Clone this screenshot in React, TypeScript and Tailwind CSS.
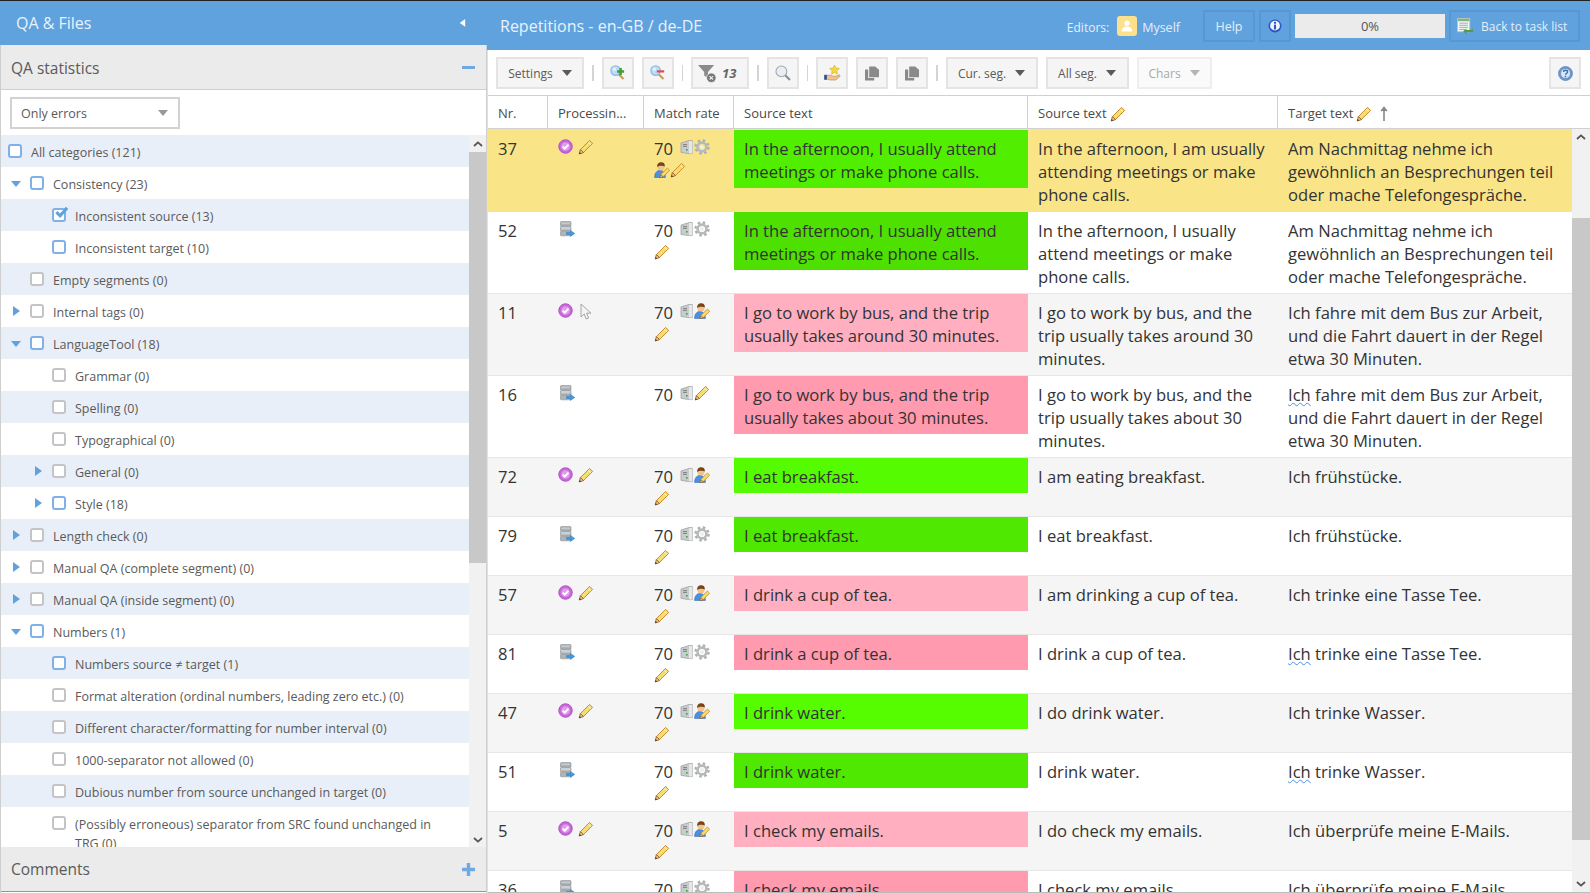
import React from "react";

type P = { className?: string };

const Pencil = ({ className = "" }: P) => (
  <svg viewBox="0 0 16 16" className={`w-4 h-4 shrink-0 ${className}`}>
    <path d="M11.6 1.4l3 3L5.4 13.6l-3-3z" fill="#f7dc6f" stroke="#c98d2e" strokeWidth="1" />
    <path d="M10.2 3.2l3 3" stroke="#fff3b8" strokeWidth="1" />
    <path d="M2.4 10.6l3 3L1.2 15z" fill="#f3d3a5" stroke="#8a5a20" strokeWidth="0.9" />
    <path d="M1.2 15l.6-2 1.4 1.4z" fill="#5a3510" />
  </svg>
);

const Purple = () => (
  <svg viewBox="0 0 16 16" className="w-[15px] h-[15px] shrink-0">
    <circle cx="8" cy="8" r="7.2" fill="#c768d6" stroke="#b04fc2" strokeWidth="1" />
    <circle cx="8" cy="8" r="4.6" fill="#dca0e6" />
    <path d="M5 8.2l2.2 2.2L11.2 6" fill="none" stroke="#fff" strokeWidth="2" />
  </svg>
);

const Server = () => (
  <svg viewBox="0 0 14 16" className="w-[14px] h-4 shrink-0">
    <path d="M1 3l8-2.4h3.4V13.6H9L1 12.4z" fill="#c9cccc" stroke="#9ea3a3" strokeWidth="0.8" />
    <path d="M9 1v12.4h3.4V1z" fill="#e6e8e8" />
    <path d="M3 4.6h4M3 6.4h4" stroke="#777" strokeWidth="0.9" />
    <rect x="6" y="9" width="1.6" height="1.6" fill="#3aa04a" />
  </svg>
);

const Gear = () => (
  <svg viewBox="0 0 16 16" className="w-4 h-4 shrink-0">
    <circle cx="8" cy="8" r="6.4" fill="none" stroke="#aeb0b0" strokeWidth="2.6" strokeDasharray="2.5 2.52" />
    <circle cx="8" cy="8" r="4.4" fill="none" stroke="#b8baba" strokeWidth="2.6" />
    <circle cx="8" cy="8" r="2" fill="#eeeeee" />
  </svg>
);

const Person = () => (
  <svg viewBox="0 0 16 16" className="w-4 h-4 shrink-0">
    <path d="M0.6 15.4c0-4.4 2.2-7 5.4-7s5.4 2.6 5.4 7z" fill="#4a90e2" stroke="#2f68b0" strokeWidth="0.6" />
    <circle cx="7" cy="5" r="3.6" fill="#f2c391" />
    <path d="M3.2 5C2.8 1.4 5.2 0.2 7.2 0.2c2.4 0 4 1.4 3.6 4.4C9 3.6 5.4 3.4 3.2 5z" fill="#7a4516" />
    <path d="M13.4 6l2.2 2.2-6.6 6.6-2.2-2.2z" fill="#f7dc6f" stroke="#c98d2e" strokeWidth="0.9" />
    <path d="M6.8 12.6l2.2 2.2-3.2 1z" fill="#f3d3a5" stroke="#8a5a20" strokeWidth="0.7" />
  </svg>
);

const Db = () => (
  <svg viewBox="0 0 16 17" className="w-4 h-[17px] shrink-0 ml-px">
    <rect x="1.5" y="0.6" width="10.5" height="4.6" rx="0.8" fill="#aeb4b8" stroke="#868c90" strokeWidth="0.6" />
    <path d="M2.5 2.2h8.5" stroke="#d9dde0" strokeWidth="0.8" />
    <rect x="1.5" y="5.4" width="10.5" height="4.6" rx="0.8" fill="#bcc2c6" stroke="#868c90" strokeWidth="0.6" />
    <path d="M2.5 7h8.5" stroke="#e4e7e9" strokeWidth="0.8" />
    <rect x="1.5" y="10.2" width="10.5" height="4.6" rx="0.8" fill="#aeb4b8" stroke="#868c90" strokeWidth="0.6" />
    <path d="M7.5 11.4h4V9.4l4.2 3-4.2 3v-2h-4z" fill="#3f9be6" stroke="#2878c0" strokeWidth="0.5" />
  </svg>
);

const Cursor = () => (
  <svg viewBox="0 0 12 18" className="w-3 h-[18px] shrink-0 ml-[2px]">
    <path d="M1 1v13l3.2-3 2 5 2.4-1-2-4.8H11z" fill="#f4f4f4" stroke="#a5a5a5" strokeWidth="1" />
  </svg>
);

const Tri = ({ dir, color, size = 10 }: { dir: "down" | "right" | "left"; color: string; size?: number }) => {
  const pts = dir === "down" ? "0,1 10,1 5,7" : dir === "right" ? "1,0 8,5 1,10" : "8,0 1,5 8,10";
  const vb = dir === "down" ? "0 0 10 8" : "0 0 9 10";
  return (
    <svg viewBox={vb} width={size} className="shrink-0" fill={color}>
      <polygon points={pts} />
    </svg>
  );
};

const Chevron = ({ up }: { up: boolean }) => (
  <svg viewBox="0 0 10 6" className="w-[10px] h-[6px]">
    <path d={up ? "M1 5l4-3.6L9 5" : "M1 1l4 3.6L9 1"} fill="none" stroke="#555" strokeWidth="1.8" />
  </svg>
);

const Magnifier = ({ sign }: { sign: "plus" | "minus" }) => (
  <svg viewBox="0 0 16 16" className="w-4 h-4">
    <path d="M8.5 9l5 5" stroke="#d29a50" strokeWidth="2.2" />
    <circle cx="5.6" cy="5.6" r="4.8" fill="#bcdcf6" stroke="#8db8dc" strokeWidth="1.1" />
    <circle cx="4.4" cy="4.2" r="1.6" fill="#e6f3fd" />
    {sign === "plus" && <path d="M10.6 3v7M7.1 6.5h7" stroke="#3f9e3a" strokeWidth="2.4" />}
    {sign === "minus" && <path d="M6.8 6.4h7.4" stroke="#e04a4a" strokeWidth="2.2" />}
  </svg>
);

const Search = () => (
  <svg viewBox="0 0 16 16" className="w-4 h-4">
    <path d="M10 10l5 5" stroke="#8b8f93" strokeWidth="2.2" />
    <circle cx="6.4" cy="6.4" r="5.4" fill="#e8eef4" stroke="#a2a8ae" strokeWidth="1.1" />
  </svg>
);

const Funnel = () => (
  <svg viewBox="0 0 20 20" className="w-[19px] h-[19px] shrink-0">
    <path d="M0 1h17l-6.5 7.5V15l-4-3V8.5z" fill="#8b8b8b" />
    <circle cx="14" cy="14.5" r="5" fill="#777" stroke="#f5f5f5" strokeWidth="0.8" />
    <path d="M12.2 12.7l3.6 3.6M15.8 12.7l-3.6 3.6" stroke="#eee" strokeWidth="1.2" />
  </svg>
);

const StarHand = () => (
  <svg viewBox="0 0 17 16" className="w-[17px] h-4">
    <path d="M10.5 0l1.5 3 3.4.5-2.5 2.3.6 3.4-3-1.6-3 1.6.6-3.4-2.5-2.3L9 3z" fill="#f8d53e" stroke="#d3a521" strokeWidth="0.5" />
    <path d="M2.6 10.2h3.6l2.6 1h3.2l3.6-1.4c.7.8.3 1.7-.5 2.3L11.8 15H6L2.6 14z" fill="#f2c391" stroke="#b7813f" strokeWidth="0.6" />
    <rect x="0.2" y="9.8" width="2.6" height="5" fill="#2c4f8a" />
  </svg>
);

const Copy = () => (
  <svg viewBox="0 0 16 16" className="w-4 h-4">
    <path d="M1 4.5h3.2V13h6v2.6H1z" fill="#8a8a8a" />
    <path d="M5.2 1.5h6L15 4.8v7.4H5.2z" fill="#8a8a8a" />
  </svg>
);

const Info = () => (
  <svg viewBox="0 0 16 16" className="w-[14px] h-[14px]">
    <circle cx="8" cy="8" r="7.4" fill="#2f55c8" />
    <circle cx="8" cy="7.6" r="5.6" fill="#f2f5fc" />
    <rect x="6.8" y="3.2" width="2.4" height="2.2" fill="#2f55c8" />
    <rect x="6.8" y="6.4" width="2.4" height="5.6" fill="#2f55c8" />
  </svg>
);

const Question = () => (
  <svg viewBox="0 0 16 16" className="w-[15px] h-[15px]">
    <circle cx="8" cy="8" r="7.4" fill="#6f9ad0" stroke="#4f7cb8" strokeWidth="0.8" />
    <circle cx="8" cy="8" r="4.8" fill="#dde8f6" />
    <path d="M6 6.4c0-2.4 4.2-2.4 4.2 0 0 1.6-2.2 1.4-2.2 3" fill="none" stroke="#3f6fb0" strokeWidth="1.5" />
    <rect x="7.2" y="10.4" width="1.6" height="1.6" fill="#3f6fb0" />
  </svg>
);

const TaskList = () => (
  <svg viewBox="0 0 18 18" className="w-[17px] h-[17px] shrink-0">
    <rect x="0.5" y="0.5" width="13" height="14" fill="#f3f6f4" stroke="#b9c4be" />
    <rect x="1" y="1" width="12" height="2.4" fill="#7cb67a" />
    <path d="M2.5 5.5h9M2.5 7.7h9M2.5 9.9h9M2.5 12.1h6" stroke="#a0a8b0" strokeWidth="1" />
    <path d="M17 11.5v3.2H10v2.2L6.4 14l3.6-3v1.8h5z" fill="#4ea03e" />
  </svg>
);

const Avatar = () => (
  <div className="w-5 h-5 rounded-[3px] bg-[#fde08a] flex items-center justify-center">
    <svg viewBox="0 0 12 12" className="w-3 h-3" fill="#fff">
      <circle cx="6" cy="3.2" r="2.6" />
      <path d="M.8 11.4c0-3.4 2.2-5 5.2-5s5.2 1.6 5.2 5z" />
    </svg>
  </div>
);

type Node = { t: string; l: 0 | 1 | 2; caret?: "open" | "closed"; blue?: boolean; checked?: boolean };

const tree: Node[] = [
  { t: "All categories (121)", l: 0, blue: true },
  { t: "Consistency (23)", l: 1, caret: "open", blue: true },
  { t: "Inconsistent source (13)", l: 2, blue: true, checked: true },
  { t: "Inconsistent target (10)", l: 2, blue: true },
  { t: "Empty segments (0)", l: 1 },
  { t: "Internal tags (0)", l: 1, caret: "closed" },
  { t: "LanguageTool (18)", l: 1, caret: "open", blue: true },
  { t: "Grammar (0)", l: 2 },
  { t: "Spelling (0)", l: 2 },
  { t: "Typographical (0)", l: 2 },
  { t: "General (0)", l: 2, caret: "closed" },
  { t: "Style (18)", l: 2, caret: "closed", blue: true },
  { t: "Length check (0)", l: 1, caret: "closed" },
  { t: "Manual QA (complete segment) (0)", l: 1, caret: "closed" },
  { t: "Manual QA (inside segment) (0)", l: 1, caret: "closed" },
  { t: "Numbers (1)", l: 1, caret: "open", blue: true },
  { t: "Numbers source ≠ target (1)", l: 2, blue: true },
  { t: "Format alteration (ordinal numbers, leading zero etc.) (0)", l: 2 },
  { t: "Different character/formatting for number interval (0)", l: 2 },
  { t: "1000-separator not allowed (0)", l: 2 },
  { t: "Dubious number from source unchanged in target (0)", l: 2 },
  { t: "(Possibly erroneous) separator from SRC found unchanged in TRG (0)", l: 2 },
];

const Box = ({ blue, checked }: { blue?: boolean; checked?: boolean }) => (
  <div className={`relative w-[14px] h-[14px] shrink-0 rounded-[3px] border-2 bg-white ${blue ? "border-[#7fb1e6]" : "border-[#c4c4c4]"}`}>
    {checked && (
      <svg viewBox="0 0 16 14" className="absolute left-0 top-[-4px] w-[15px] h-[13px]">
        <path d="M2.5 6.5l4 4L14 2" fill="none" stroke="#5fa2de" strokeWidth="3.4" />
      </svg>
    )}
  </div>
);

const TreeRow = ({ n, i }: { n: Node; i: number }) => {
  const pad = n.l === 0 ? "pl-[7px]" : n.l === 1 ? "pl-[29px]" : "pl-[51px]";
  return (
    <div className={`relative min-h-8 shrink-0 flex ${pad} ${i % 2 === 0 ? "bg-[#e8eff9]" : "bg-white"}`}>
      {n.caret === "open" && (
        <div className="absolute top-[13px] left-[10px]">
          <Tri dir="down" color="#5fa2de" size={10} />
        </div>
      )}
      {n.caret === "closed" && (
        <div className={`absolute top-[11px] ${n.l === 2 ? "left-[33px]" : "left-[11px]"}`}>
          <Tri dir="right" color="#5fa2de" size={9} />
        </div>
      )}
      <div className="pt-[9px]">
        <Box blue={n.blue} checked={n.checked} />
      </div>
      <div className={`pt-[8px] pb-[5px] ml-[9px] text-[12.5px] leading-[19px] text-[#5a5a5a] ${n.l === 2 ? "w-[375px]" : ""}`}>{n.t}</div>
    </div>
  );
};

const Btn = ({ children, className = "" }: { children: React.ReactNode; className?: string }) => (
  <div className={`h-8 shrink-0 bg-[#f5f5f5] border-2 border-[#e4e4e4] flex items-center justify-center text-[12px] text-[#5a5a5a] ${className}`}>{children}</div>
);

const Sep = () => <div className="w-[1.5px] h-4 shrink-0 bg-[#d4d4d4]" />;

const Drop = ({ label, w, faded }: { label: string; w: string; faded?: boolean }) => (
  <Btn className={`${w} gap-[9px] ${faded ? "bg-[#fafafa] border-[#eeeeee] text-[#a9a9a9]" : ""}`}>
    <span className="pt-[2px]">{label}</span>
    <Tri dir="down" color={faded ? "#b5b5b5" : "#5a5a5a"} size={10} />
  </Btn>
);

type Seg = {
  nr: string;
  proc: "check-pencil" | "check-cursor" | "db";
  match: ("gear" | "person" | "pencil")[];
  src: string;
  srcBg: string;
  s2: string;
  tg: string;
  wavy?: boolean;
  h: string;
  bg: string;
};

const segs: Seg[] = [
  { nr: "37", proc: "check-pencil", match: ["gear", "person", "pencil"], src: "In the afternoon, I usually attend meetings or make phone calls.", srcBg: "bg-[#52ee00]", s2: "In the afternoon, I am usually attending meetings or make phone calls.", tg: "Am Nachmittag nehme ich gewöhnlich an Besprechungen teil oder mache Telefongespräche.", h: "h-[83px] pt-px", bg: "bg-[#f9e587] border-[#f9e587]" },
  { nr: "52", proc: "db", match: ["gear", "pencil"], src: "In the afternoon, I usually attend meetings or make phone calls.", srcBg: "bg-[#4ee000]", s2: "In the afternoon, I usually attend meetings or make phone calls.", tg: "Am Nachmittag nehme ich gewöhnlich an Besprechungen teil oder mache Telefongespräche.", h: "h-[82px]", bg: "bg-white border-[#e6e6e6]" },
  { nr: "11", proc: "check-cursor", match: ["person", "pencil"], src: "I go to work by bus, and the trip usually takes around 30 minutes.", srcBg: "bg-[#ffafc0]", s2: "I go to work by bus, and the trip usually takes around 30 minutes.", tg: "Ich fahre mit dem Bus zur Arbeit, und die Fahrt dauert in der Regel etwa 30 Minuten.", h: "h-[82px]", bg: "bg-[#f5f5f5] border-[#e6e6e6]" },
  { nr: "16", proc: "db", match: ["pencil"], src: "I go to work by bus, and the trip usually takes about 30 minutes.", srcBg: "bg-[#ff9aaf]", s2: "I go to work by bus, and the trip usually takes about 30 minutes.", tg: " fahre mit dem Bus zur Arbeit, und die Fahrt dauert in der Regel etwa 30 Minuten.", wavy: true, h: "h-[82px]", bg: "bg-white border-[#e6e6e6]" },
  { nr: "72", proc: "check-pencil", match: ["person", "pencil"], src: "I eat breakfast.", srcBg: "bg-[#55fb00]", s2: "I am eating breakfast.", tg: "Ich frühstücke.", h: "h-[59px]", bg: "bg-[#f5f5f5] border-[#e6e6e6]" },
  { nr: "79", proc: "db", match: ["gear", "pencil"], src: "I eat breakfast.", srcBg: "bg-[#4fe800]", s2: "I eat breakfast.", tg: "Ich frühstücke.", h: "h-[59px]", bg: "bg-white border-[#e6e6e6]" },
  { nr: "57", proc: "check-pencil", match: ["person", "pencil"], src: "I drink a cup of tea.", srcBg: "bg-[#ffafc0]", s2: "I am drinking a cup of tea.", tg: "Ich trinke eine Tasse Tee.", h: "h-[59px]", bg: "bg-[#f5f5f5] border-[#e6e6e6]" },
  { nr: "81", proc: "db", match: ["gear", "pencil"], src: "I drink a cup of tea.", srcBg: "bg-[#ff9aaf]", s2: "I drink a cup of tea.", tg: " trinke eine Tasse Tee.", wavy: true, h: "h-[59px]", bg: "bg-white border-[#e6e6e6]" },
  { nr: "47", proc: "check-pencil", match: ["person", "pencil"], src: "I drink water.", srcBg: "bg-[#55fd00]", s2: "I do drink water.", tg: "Ich trinke Wasser.", h: "h-[59px]", bg: "bg-[#f5f5f5] border-[#e6e6e6]" },
  { nr: "51", proc: "db", match: ["gear", "pencil"], src: "I drink water.", srcBg: "bg-[#4fe800]", s2: "I drink water.", tg: " trinke Wasser.", wavy: true, h: "h-[59px]", bg: "bg-white border-[#e6e6e6]" },
  { nr: "5", proc: "check-pencil", match: ["person", "pencil"], src: "I check my emails.", srcBg: "bg-[#ffafc0]", s2: "I do check my emails.", tg: "Ich überprüfe meine E-Mails.", h: "h-[59px]", bg: "bg-[#f5f5f5] border-[#e6e6e6]" },
  { nr: "36", proc: "db", match: ["gear", "pencil"], src: "I check my emails.", srcBg: "bg-[#ff9aaf]", s2: "I check my emails.", tg: "Ich überprüfe meine E-Mails.", h: "h-[59px]", bg: "bg-white border-[#e6e6e6]" },
];

const Row = ({ s }: { s: Seg }) => (
  <div className={`flex shrink-0 border-b text-[16.6px] leading-[23px] text-[#333] ${s.h} ${s.bg}`}>
    <div className="w-[59px] shrink-0 pl-[10px] pt-[7px]">{s.nr}</div>
    <div className="w-[96px] shrink-0 pl-[11px] pt-[9px] flex items-start gap-[5px]">
      {s.proc === "db" && <Db />}
      {s.proc !== "db" && <Purple />}
      {s.proc === "check-pencil" && <Pencil />}
      {s.proc === "check-cursor" && <Cursor />}
    </div>
    <div className="w-[91px] shrink-0 pl-[11px] pr-[12px] pt-[6px] flex flex-wrap content-start">
      <div className="h-[23px] w-[26px] pt-px">70</div>
      <div className="h-[23px] flex items-center"><Server /></div>
      {s.match.map((m, i) => (
        <div key={i} className="h-[22px] flex items-center">
          {m === "gear" && <Gear />}
          {m === "person" && <Person />}
          {m === "pencil" && <Pencil />}
        </div>
      ))}
    </div>
    <div className="w-[294px] shrink-0">
      <div className={`px-[10px] pt-[7px] pb-[5px] ${s.srcBg}`}>{s.src}</div>
    </div>
    <div className="w-[245px] shrink-0 pl-[10px] pt-[7px]">{s.s2}</div>
    <div className="w-[299px] shrink-0 pl-[15px] pr-[6px] pt-[7px]">
      {s.wavy && <span className="underline decoration-wavy decoration-[#4a90e2] decoration-1">Ich</span>}
      {s.tg}
    </div>
  </div>
);

const Head = ({ w, children }: { w: string; children: React.ReactNode }) => (
  <div className={`${w} shrink-0 h-full border-r border-[#d0d0d0] pl-[10px] pt-[3px] flex items-center gap-[3px]`}>{children}</div>
);

export default function App() {
  return (
    <div className="w-[1590px] h-[893px] overflow-hidden flex border-t border-[#222] bg-white font-['Open_Sans',sans-serif]">
      <aside className="w-[487px] shrink-0 h-full flex flex-col">
        <div className="h-[44px] shrink-0 bg-[#5fa2de] flex items-center pl-4 pr-[21px] text-[16px] text-[#e9f2fb]">
          <span className="flex-1">QA &amp; Files</span>
          <Tri dir="left" color="#ffffff" size={7} />
        </div>
        <div className="flex-1 min-h-0 flex flex-col border-x border-[#cfcfcf]">
          <div className="h-[45px] shrink-0 bg-[#ebebeb] border-b border-[#cfcfcf] flex items-center justify-between pl-[10px] pr-[11px] text-[15.5px] text-[#5a5a5a]">
            <span className="pt-1">QA statistics</span>
            <div className="w-[13px] h-[3px] bg-[#6fa9e0]" />
          </div>
          <div className="h-[45px] shrink-0 pl-[9px] pt-[7px]">
            <div className="w-[170px] h-8 border-2 border-[#d2d2d2] flex items-center justify-between pl-[9px] pr-[10px] text-[12.5px] text-[#5a5a5a]">
              <span className="pt-[2px]">Only errors</span>
              <Tri dir="down" color="#999999" size={10} />
            </div>
          </div>
          <div className="flex-1 min-h-0 flex">
            <div className="w-[468px] shrink-0 overflow-hidden flex flex-col">
              {tree.map((n, i) => (
                <TreeRow key={i} n={n} i={i} />
              ))}
            </div>
            <div className="flex-1 flex flex-col bg-[#f1f1f1]">
              <div className="h-[17px] flex items-center justify-center"><Chevron up /></div>
              <div className="h-[411px] bg-[#c8c8c8]" />
              <div className="flex-1 flex items-end justify-center pb-[4px]"><Chevron up={false} /></div>
            </div>
          </div>
          <div className="h-[45px] shrink-0 bg-[#ebebeb] border-b border-[#5fa2de] flex items-center justify-between pl-[10px] pr-[11px] text-[15.5px] text-[#5a5a5a]">
            <span className="pt-[2px]">Comments</span>
            <svg viewBox="0 0 13 13" className="w-[13px] h-[13px]"><path d="M6.5 0v13M0 6.5h13" stroke="#6fa9e0" strokeWidth="3.4" /></svg>
          </div>
          <div className="h-px shrink-0" />
        </div>
      </aside>

      <main className="flex-1 min-w-0 h-full flex flex-col">
        <div className="h-[49px] shrink-0 bg-[#5fa2de] flex items-center pl-[13px] pr-[10px] pt-px">
          <span className="text-[16px] text-[#e9f2fb] flex-1">Repetitions - en-GB / de-DE</span>
          <div className="flex items-center text-[12px] text-[#e4eefa] mt-[3px] mr-[23px]">
            <span className="pt-px">Editors:</span>
            <div className="ml-2 mr-[5px] -mt-[3px]"><Avatar /></div>
            <span className="pt-px text-[12.5px]">Myself</span>
          </div>
          <div className="flex items-center gap-1">
            <div className="h-8 w-[52px] border-2 border-[#5797d2] flex items-center justify-center text-[12.5px] text-[#e4eefa] pt-[2px]">Help</div>
            <div className="h-8 w-8 border-2 border-[#5797d2] flex items-center justify-center"><Info /></div>
            <div className="h-6 w-[150px] bg-[#ebebeb] flex items-center justify-center text-[13px] text-[#555] pt-[2px]">0%</div>
            <div className="h-8 w-[131px] border-2 border-[#5797d2] flex items-center pl-[6px] gap-[7px] text-[12px] text-[#e4eefa]"><TaskList /><span className="pt-[2px]">Back to task list</span></div>
          </div>
        </div>
        <div className="flex-1 min-h-0 flex flex-col border-l border-[#e0e0e0]">
          <div className="h-[46px] shrink-0 flex items-center gap-2 pl-2 pr-[9px] border-b border-[#d0d0d0] pt-px">
            <Drop label="Settings" w="w-[88px]" />
            <Sep />
            <Btn className="w-8"><Magnifier sign="plus" /></Btn>
            <Btn className="w-8"><Magnifier sign="minus" /></Btn>
            <Sep />
            <Btn className="w-[58px] !justify-start pl-[5px] gap-[5px]"><Funnel /><span className="font-bold italic text-[13px] text-[#666] pt-[2px]">13</span></Btn>
            <Sep />
            <Btn className="w-8"><Search /></Btn>
            <Sep />
            <Btn className="w-8"><StarHand /></Btn>
            <Btn className="w-8"><Copy /></Btn>
            <Btn className="w-8"><Copy /></Btn>
            <Sep />
            <Drop label="Cur. seg." w="w-[92px]" />
            <Drop label="All seg." w="w-[83px]" />
            <Drop label="Chars" w="w-[75px]" faded />
            <Btn className="w-8 ml-auto"><Question /></Btn>
          </div>
          <div className="h-[33px] shrink-0 flex border-b border-[#d0d0d0] text-[13px] text-[#4a4a4a]">
            <Head w="w-[60px]">Nr.</Head>
            <Head w="w-[96px]">Processin...</Head>
            <Head w="w-[90px]">Match rate</Head>
            <Head w="w-[294px]">Source text</Head>
            <Head w="w-[250px]">Source text <Pencil /></Head>
            <div className="flex-1 pl-[10px] pt-[3px] flex items-center gap-[3px]">
              Target text <Pencil />
              <svg viewBox="0 0 8 16" className="w-2 h-4 ml-[5px]"><path d="M4 15V2M1.2 5L4 1.5 6.8 5" fill="#888" stroke="#888" strokeWidth="1.6" /></svg>
            </div>
          </div>
          <div className="flex-1 min-h-0 flex border-b border-[#bcbcbc]">
            <div className="w-[1084px] shrink-0 flex flex-col overflow-hidden">
              {segs.map((s) => (
                <Row key={s.nr} s={s} />
              ))}
            </div>
            <div className="flex-1 flex flex-col bg-[#f1f1f1]">
              <div className="h-[18px] pb-[2px] flex items-center justify-center"><Chevron up /></div>
              <div className="h-[71px]" />
              <div className="h-[622px] bg-[#c8c8c8]" />
              <div className="flex-1 flex items-end justify-center pb-[5px]"><Chevron up={false} /></div>
            </div>
          </div>
        </div>
      </main>
    </div>
  );
}
